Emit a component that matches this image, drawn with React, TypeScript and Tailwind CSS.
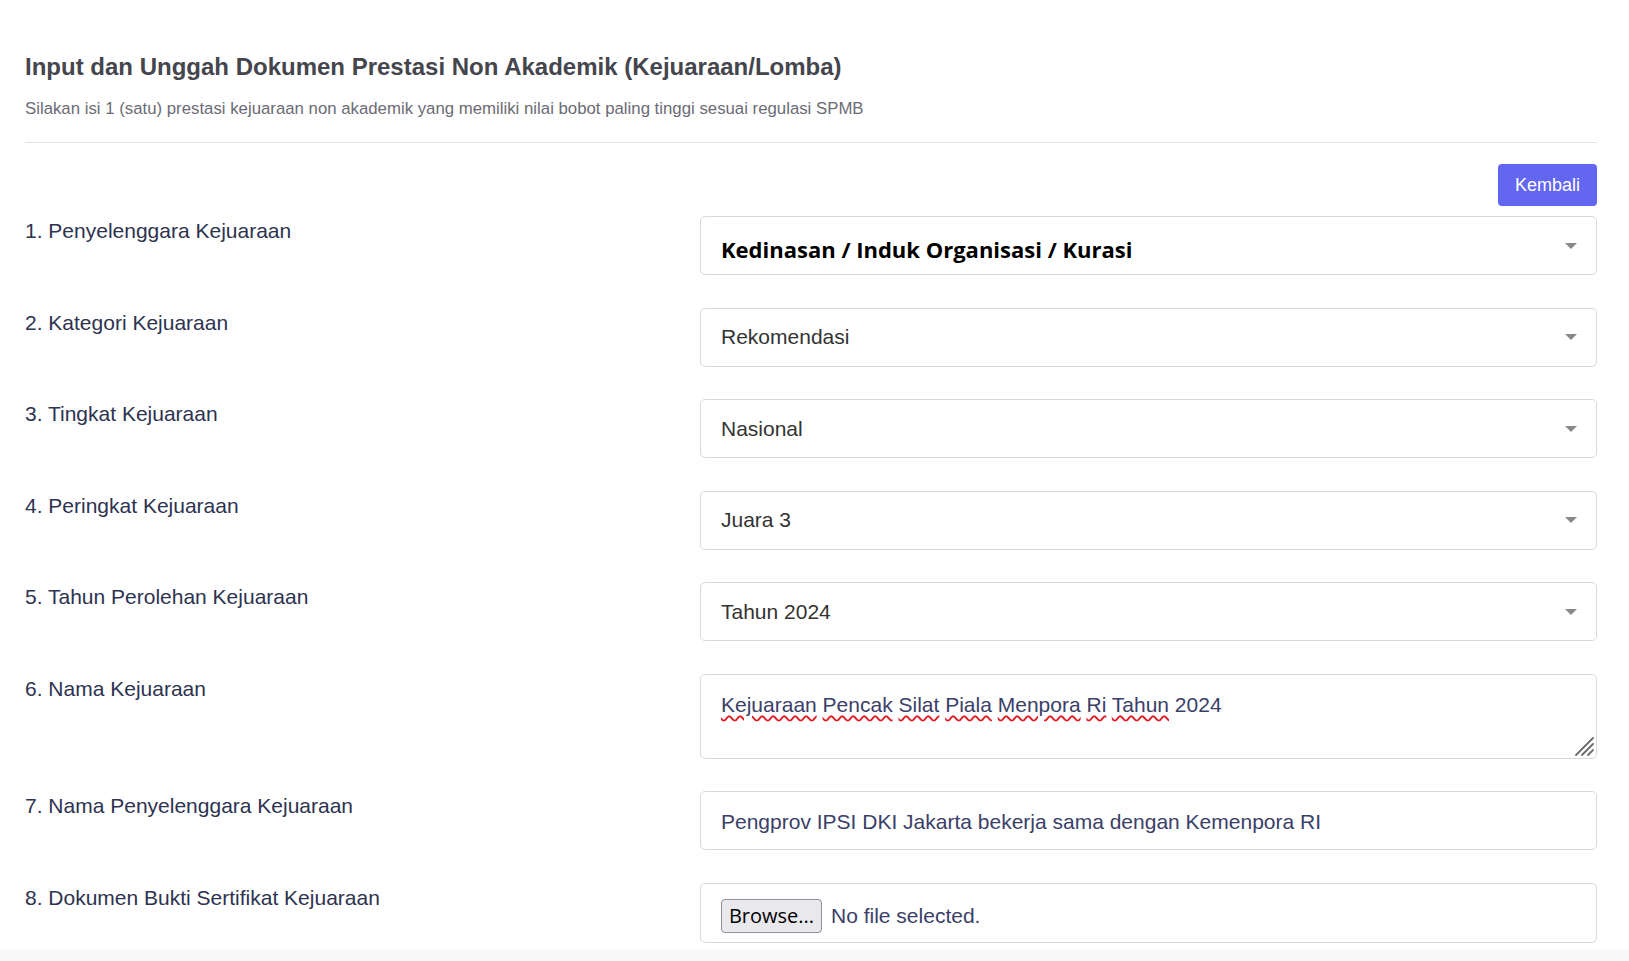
import React from "react";

const selects = [
  { label: "1. Penyelenggara Kejuaraan", value: "Kedinasan / Induk Organisasi / Kurasi", bold: true },
  { label: "2. Kategori Kejuaraan", value: "Rekomendasi" },
  { label: "3. Tingkat Kejuaraan", value: "Nasional" },
  { label: "4. Peringkat Kejuaraan", value: "Juara 3" },
  { label: "5. Tahun Perolehan Kejuaraan", value: "Tahun 2024" },
];

const misspelled = ["Kejuaraan", "Pencak", "Silat", "Piala", "Menpora", "Ri", "Tahun"];

function Label({ children }: { children: React.ReactNode }) {
  return <div className="text-[21px] leading-[30px] text-[#2d3350]">{children}</div>;
}

function SelectBox({ value, bold }: { value: string; bold?: boolean }) {
  return (
    <div className="h-[59px] rounded-[5px] border border-[#d9d9d9] bg-white flex items-center pl-[20px] pr-[19px]">
      <span
        className={
          bold
            ? "flex-1 pt-[8px] font-['Open_Sans',sans-serif] font-bold text-[22px] text-black"
            : "flex-1 text-[21px] text-[#333333]"
        }
      >
        {value}
      </span>
      <span className="w-0 h-0 border-l-[6px] border-r-[6px] border-t-[6px] border-l-transparent border-r-transparent border-t-[#888888]" />
    </div>
  );
}

export default function App() {
  return (
    <div className="min-h-screen bg-[#f8f8f8] font-['Liberation_Sans',Arial,sans-serif]">
      <div className="bg-white pl-[25px] pr-[32px] pt-[53px] pb-[6px]">
        <h1 className="text-[24px] leading-[28px] font-bold text-[#44454d]">
          Input dan Unggah Dokumen Prestasi Non Akademik (Kejuaraan/Lomba)
        </h1>
        <p className="mt-[18px] text-[16.8px] leading-[20px] text-[#6b6b75]">
          Silakan isi 1 (satu) prestasi kejuaraan non akademik yang memiliki nilai bobot paling tinggi sesuai regulasi SPMB
        </p>
        <div className="mt-[23px] border-t border-[#e3e3e3]" />

        <div className="mt-[21px] flex justify-end">
          <button className="h-[42px] w-[99px] rounded-[4px] bg-[#6366f1] text-[18px] text-white">Kembali</button>
        </div>

        <div className="mt-[10px] grid grid-cols-[675px_1fr] gap-y-[32.5px]">
          {selects.map((s) => (
            <React.Fragment key={s.label}>
              <Label>{s.label}</Label>
              <SelectBox value={s.value} bold={s.bold} />
            </React.Fragment>
          ))}

          <Label>6. Nama Kejuaraan</Label>
          <div className="relative h-[85px] rounded-[5px] border border-[#d9d9d9] bg-white pl-[20px] pt-[17px] text-[21px] leading-[26px] text-[#3a4068]">
            {misspelled.map((w) => (
              <React.Fragment key={w}>
                <span className="underline decoration-wavy decoration-[#e01b24] decoration-[1.5px] underline-offset-[3px]">{w}</span>{" "}
              </React.Fragment>
            ))}
            2024
            <svg className="absolute right-[1px] bottom-[1px]" width="22" height="22" viewBox="0 0 22 22">
              <path d="M20 3 L3 20 M20 9 L9 20 M20 15 L15 20" stroke="#6b6b6b" strokeWidth="1.8" strokeLinecap="round" />
            </svg>
          </div>

          <Label>7. Nama Penyelenggara Kejuaraan</Label>
          <div className="h-[59px] rounded-[5px] border border-[#d9d9d9] bg-white flex items-center pl-[20px] pt-[2px] text-[21px] text-[#3a4068]">
            Pengprov IPSI DKI Jakarta bekerja sama dengan Kemenpora RI
          </div>

          <Label>8. Dokumen Bukti Sertifikat Kejuaraan</Label>
          <div className="h-[60px] rounded-[5px] border border-[#d9d9d9] bg-white flex items-center pl-[20px] pt-[7px] text-[21px] text-[#3a4068]">
            <span className="h-[34px] w-[101px] rounded-[4px] border border-[#8f8f9d] bg-[#e9e9ed] flex items-center justify-center font-['Open_Sans',sans-serif] text-[20px] text-black">
              Browse...
            </span>
            <span className="ml-[9px]">No file selected.</span>
          </div>
        </div>
      </div>
    </div>
  );
}
